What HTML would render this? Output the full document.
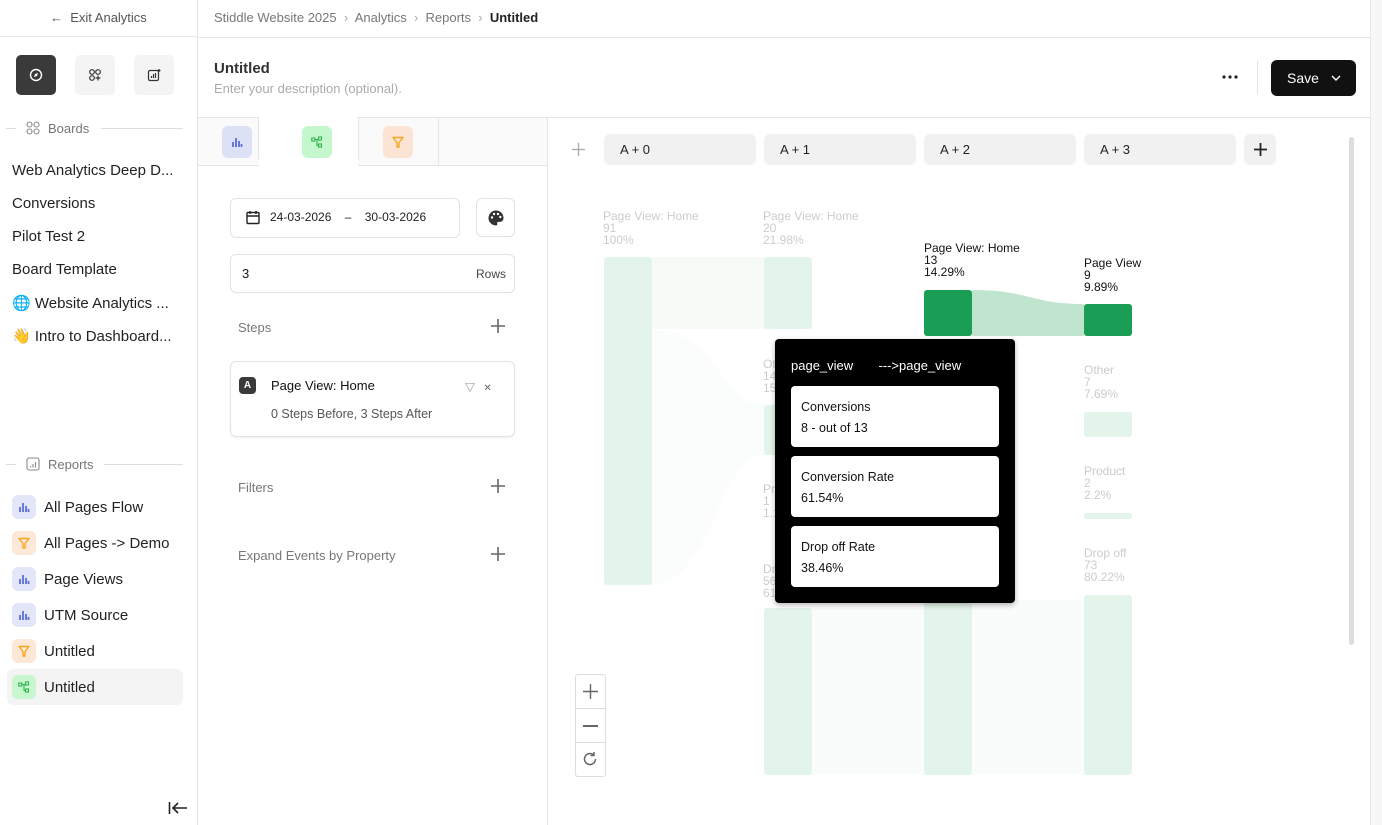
<!DOCTYPE html>
<html><head><meta charset="utf-8"><style>
*{box-sizing:border-box;margin:0;padding:0}
body{width:1382px;height:825px;overflow:hidden;background:#fff;font-family:"Liberation Sans","Noto Sans CJK SC",sans-serif;color:#1a1a1a;position:relative}
.a{position:absolute}
.t{white-space:nowrap}
.ico{display:flex;align-items:center;justify-content:center;border-radius:6px}
.nav{font-size:15px;left:12px;color:#222}
.rep{left:12px;height:24px;display:flex;align-items:center;font-size:15px;color:#222}
.rep .ico{width:24px;height:24px;margin-right:8px}
.g{color:#ccc;font-size:12px;line-height:12px}
.node{position:absolute;border-radius:3px;background:#e3f4ea}
.btn{background:#f1f1f1;border-radius:6px;font-size:13px;padding-left:16px;display:flex;align-items:center;color:#222}
.card{background:#fff;border-radius:4px;position:absolute;left:16px;width:208px;height:61px;padding:11px 10px;font-size:12.5px;line-height:21px;color:#111}
</style></head><body>
<svg width="0" height="0" style="position:absolute">
<defs>
<symbol id="bar" viewBox="0 0 12 12"><path d="M2 11V6M5 11V2M8 11V5M10.5 11V8" stroke="currentColor" stroke-width="1.8" fill="none"/></symbol>
<symbol id="fun" viewBox="0 0 12 12"><path d="M1 1.5h10L7 6.5V11H5V6.5z" fill="none" stroke="currentColor" stroke-width="1.4" stroke-linejoin="round"/></symbol>
<symbol id="flw" viewBox="0 0 12 12"><g fill="none" stroke="currentColor" stroke-width="1.1"><rect x="0.8" y="2" width="3" height="3"/><rect x="7.5" y="1" width="3" height="3"/><rect x="7.5" y="8" width="3" height="3"/><path d="M3.8 3.5h3.7M6 3.5v6h1.5"/></g></symbol>
</defs></svg>

<!-- sidebar -->
<div class="a" style="left:197px;top:0;width:1px;height:825px;background:#e5e5e5"></div>
<div class="a t" style="left:50px;top:10px;font-size:13px;color:#555">← &nbsp;Exit Analytics</div>
<div class="a" style="left:0;top:36px;width:197px;height:1px;background:#e5e5e5"></div>
<div class="a ico" style="left:16px;top:55px;width:40px;height:40px;background:#3a3a3a;border-radius:5px"><svg width="14" height="14" viewBox="0 0 14 14"><circle cx="7" cy="7" r="5.5" fill="none" stroke="#fff" stroke-width="1.4"/><path d="M9 5L6 6 5 9 8 8z" fill="#fff"/></svg></div>
<div class="a ico" style="left:75px;top:55px;width:40px;height:40px;background:#f4f4f4;border-radius:5px"><svg width="14" height="14" viewBox="0 0 14 14" fill="none" stroke="#333" stroke-width="1.2"><circle cx="4" cy="4" r="2.3"/><circle cx="10" cy="4" r="2.3"/><circle cx="4" cy="10" r="2.3"/><path d="M10 7.5v5M7.5 10h5"/></svg></div>
<div class="a ico" style="left:134px;top:55px;width:40px;height:40px;background:#f4f4f4;border-radius:5px"><svg width="14" height="14" viewBox="0 0 14 14" fill="none" stroke="#333" stroke-width="1.2"><rect x="1.5" y="2.5" width="10" height="10" rx="1.5"/><path d="M4.5 10V8M6.5 10V6M8.5 10V5M12 1v3M10.5 2.5h3"/></svg></div>
<div class="a" style="left:6px;top:128px;width:10px;height:1px;background:#ddd"></div>
<svg class="a" style="left:26px;top:121px" width="14" height="14" viewBox="0 0 14 14" fill="none" stroke="#888" stroke-width="1.1"><circle cx="3.5" cy="3.5" r="2.5"/><circle cx="10.5" cy="3.5" r="2.5"/><circle cx="3.5" cy="10.5" r="2.5"/><circle cx="10.5" cy="10.5" r="2.5"/></svg>
<div class="a t" style="left:48px;top:121px;font-size:13px;color:#777">Boards</div>
<div class="a" style="left:101px;top:128px;width:82px;height:1px;background:#ddd"></div>
<div class="a t nav" style="top:162px">Web Analytics Deep D...</div>
<div class="a t nav" style="top:195px">Conversions</div>
<div class="a t nav" style="top:228px">Pilot Test 2</div>
<div class="a t nav" style="top:261px">Board Template</div>
<div class="a t nav" style="top:294px">🌐 Website Analytics ...</div>
<div class="a t nav" style="top:327px">👋 Intro to Dashboard...</div>
<div class="a" style="left:6px;top:464px;width:10px;height:1px;background:#ddd"></div>
<svg class="a" style="left:26px;top:457px" width="14" height="14" viewBox="0 0 14 14" fill="none" stroke="#888" stroke-width="1.1"><rect x="1" y="1" width="12" height="12" rx="2"/><path d="M4.5 10.5V9M7 10.5V7M9.5 10.5V5"/></svg>
<div class="a t" style="left:48px;top:457px;font-size:13px;color:#777">Reports</div>
<div class="a" style="left:104px;top:464px;width:79px;height:1px;background:#ddd"></div>
<div class="a" style="left:7px;top:669px;width:176px;height:36px;background:#f4f4f4;border-radius:6px"></div>
<div class="a rep t" style="top:495px"><span class="ico" style="background:#e3e6f8;color:#5a6fd8"><svg width="12" height="12"><use href="#bar"/></svg></span>All Pages Flow</div>
<div class="a rep t" style="top:531px"><span class="ico" style="background:#fde7d6;color:#f5a623"><svg width="12" height="12"><use href="#fun"/></svg></span>All Pages -&gt; Demo</div>
<div class="a rep t" style="top:567px"><span class="ico" style="background:#e3e6f8;color:#5a6fd8"><svg width="12" height="12"><use href="#bar"/></svg></span>Page Views</div>
<div class="a rep t" style="top:603px"><span class="ico" style="background:#e3e6f8;color:#5a6fd8"><svg width="12" height="12"><use href="#bar"/></svg></span>UTM Source</div>
<div class="a rep t" style="top:639px"><span class="ico" style="background:#fde7d6;color:#f5a623"><svg width="12" height="12"><use href="#fun"/></svg></span>Untitled</div>
<div class="a rep t" style="top:675px"><span class="ico" style="background:#c8f7cf;color:#2fb34a"><svg width="12" height="12"><use href="#flw"/></svg></span>Untitled</div>
<svg class="a" style="left:168px;top:801px" width="20" height="14" viewBox="0 0 20 14" fill="none" stroke="#222" stroke-width="1.6"><path d="M1.5 1v12M5 7h14M10 2L5 7l5 5"/></svg>

<!-- header -->
<div class="a t" style="left:214px;top:10px;font-size:13px;color:#777">Stiddle Website 2025 &nbsp;<span style="color:#aaa">›</span>&nbsp; Analytics &nbsp;<span style="color:#aaa">›</span>&nbsp; Reports &nbsp;<span style="color:#aaa">›</span>&nbsp; <span style="color:#222;font-weight:bold">Untitled</span></div>
<div class="a" style="left:198px;top:37px;width:1172px;height:1px;background:#e5e5e5"></div>
<div class="a t" style="left:214px;top:60px;font-size:15px;font-weight:bold;color:#333">Untitled</div>
<div class="a t" style="left:214px;top:81px;font-size:13px;color:#aaa">Enter your description (optional).</div>
<svg class="a" style="left:1222px;top:75px" width="16" height="4"><circle cx="2" cy="2" r="1.6" fill="#222"/><circle cx="8" cy="2" r="1.6" fill="#222"/><circle cx="14" cy="2" r="1.6" fill="#222"/></svg>
<div class="a" style="left:1257px;top:61px;width:1px;height:34px;background:#e5e5e5"></div>
<div class="a t" style="left:1271px;top:60px;width:85px;height:36px;background:#111;border-radius:6px;color:#fff;font-size:14px;display:flex;align-items:center;padding-left:16px">Save <svg style="margin-left:12px" width="10" height="6" viewBox="0 0 10 6"><path d="M1 1l4 4 4-4" fill="none" stroke="#fff" stroke-width="1.4"/></svg></div>
<div class="a" style="left:198px;top:117px;width:1172px;height:1px;background:#e5e5e5"></div>
<div class="a" style="left:1370px;top:0;width:12px;height:825px;background:#f7f7f7;border-left:1px solid #e8e8e8"></div>
<div class="a" style="left:1349px;top:137px;width:5px;height:508px;background:#ddd;border-radius:3px"></div>

<!-- left config panel -->
<div class="a" style="left:198px;top:118px;width:350px;height:48px;background:#fafafa"></div>
<div class="a" style="left:198px;top:165px;width:350px;height:1px;background:#e5e5e5"></div>
<div class="a" style="left:258px;top:117px;width:101px;height:49px;background:#fff;border:1px solid #e5e5e5;border-top:none;border-bottom:none;border-radius:0 0 10px 10px"></div>
<div class="a" style="left:259px;top:160px;width:99px;height:8px;background:#fff"></div>
<div class="a" style="left:438px;top:118px;width:1px;height:48px;background:#e5e5e5"></div>
<div class="a" style="left:547px;top:118px;width:1px;height:707px;background:#e5e5e5"></div>
<div class="a ico" style="left:222px;top:126px;width:30px;height:32px;background:#dde1f5;color:#5a6fd8"><svg width="12" height="12"><use href="#bar"/></svg></div>
<div class="a ico" style="left:302px;top:126px;width:30px;height:32px;background:#c4f7cc;color:#2fb34a"><svg width="12" height="12"><use href="#flw"/></svg></div>
<div class="a ico" style="left:383px;top:126px;width:30px;height:32px;background:#fbe4d4;color:#f5a623"><svg width="12" height="12"><use href="#fun"/></svg></div>

<div class="a" style="left:230px;top:198px;width:230px;height:40px;border:1px solid #e2e2e2;border-radius:6px"></div>
<svg class="a" style="left:246px;top:210px" width="14" height="15" viewBox="0 0 14 15" fill="none" stroke="#222" stroke-width="1.4"><rect x="1" y="2.5" width="12" height="11" rx="1"/><path d="M1 6h12M4 1v3M10 1v3"/></svg>
<div class="a t" style="left:270px;top:210px;font-size:12px;color:#222">24-03-2026 &nbsp;&nbsp;&nbsp;–&nbsp;&nbsp;&nbsp; 30-03-2026</div>
<div class="a ico" style="left:476px;top:198px;width:39px;height:39px;border:1px solid #e2e2e2;border-radius:6px"><svg width="18" height="18" viewBox="0 0 18 18"><path d="M9 1.5a7.5 7.5 0 0 0 0 15c1 0 1.5-.7 1.2-1.6-.4-1 .2-2 1.3-2H13a3.7 3.7 0 0 0 3.5-3.7C16.5 4.6 13.2 1.5 9 1.5z" fill="#333"/><circle cx="5" cy="8.5" r="1.2" fill="#fff"/><circle cx="7" cy="5" r="1.2" fill="#fff"/><circle cx="11" cy="5" r="1.2" fill="#fff"/><circle cx="13.3" cy="8" r="1.2" fill="#fff"/></svg></div>
<div class="a" style="left:230px;top:254px;width:285px;height:39px;border:1px solid #e2e2e2;border-radius:6px"></div>
<div class="a t" style="left:242px;top:266px;font-size:13px">3</div>
<div class="a t" style="left:476px;top:267px;font-size:12px;color:#444">Rows</div>
<div class="a t" style="left:238px;top:320px;font-size:13px;color:#777">Steps</div>
<svg class="a" style="left:491px;top:319px" width="14" height="14" stroke="#666" stroke-width="1.6"><path d="M7 0v14M0 7h14"/></svg>
<div class="a" style="left:230px;top:361px;width:285px;height:76px;border:1px solid #e2e2e2;border-radius:6px;box-shadow:0 1px 2px rgba(0,0,0,.06)"></div>
<div class="a ico" style="left:239px;top:377px;width:17px;height:17px;background:#3a3a3a;border-radius:4px;color:#fff;font-size:10px;font-weight:bold">A</div>
<div class="a t" style="left:271px;top:378px;font-size:13px;color:#111">Page View: Home</div>
<div class="a t" style="left:465px;top:379px;font-size:10px;color:#666">▽ &nbsp;&nbsp;✕</div>
<div class="a t" style="left:271px;top:407px;font-size:12.5px;color:#555">0 Steps Before, 3 Steps After</div>
<div class="a t" style="left:238px;top:480px;font-size:13px;color:#777">Filters</div>
<svg class="a" style="left:491px;top:479px" width="14" height="14" stroke="#666" stroke-width="1.6"><path d="M7 0v14M0 7h14"/></svg>
<div class="a t" style="left:238px;top:548px;font-size:13px;color:#777">Expand Events by Property</div>
<svg class="a" style="left:491px;top:547px" width="14" height="14" stroke="#666" stroke-width="1.6"><path d="M7 0v14M0 7h14"/></svg>

<!-- chart -->
<svg class="a" style="left:572px;top:143px" width="13" height="13" stroke="#aaa" stroke-width="1.3"><path d="M6.5 0v13M0 6.5h13"/></svg>
<div class="a btn t" style="left:604px;top:134px;width:152px;height:31px">A + 0</div>
<div class="a btn t" style="left:764px;top:134px;width:152px;height:31px">A + 1</div>
<div class="a btn t" style="left:924px;top:134px;width:152px;height:31px">A + 2</div>
<div class="a btn t" style="left:1084px;top:134px;width:152px;height:31px">A + 3</div>
<div class="a ico" style="left:1244px;top:134px;width:32px;height:31px;background:#f1f1f1"><svg width="13" height="13" stroke="#222" stroke-width="1.8"><path d="M6.5 0v13M0 6.5h13"/></svg></div>

<svg class="a" style="left:550px;top:170px" width="800" height="620">
<path d="M102 87 H214 V159 H102z" fill="#f6fbf8"/>
<path d="M102 160 C170 160 170 235 214 235 V285 C170 285 160 415 102 415 z" fill="#fafdfb"/>
<path d="M262 438 H374 V605 H262z M422 430 H534 V605 H422z" fill="#f9fcfa"/>
<path d="M422 120 C480 120 480 134 534 134 V166 C480 166 480 166 422 166z" fill="#bfe5cf"/>
</svg>
<div class="node" style="left:604px;top:257px;width:48px;height:328px"></div>
<div class="node" style="left:764px;top:257px;width:48px;height:72px"></div>
<div class="node" style="left:764px;top:405px;width:48px;height:50px"></div>
<div class="node" style="left:764px;top:608px;width:48px;height:167px"></div>
<div class="node" style="left:924px;top:290px;width:48px;height:46px;background:#1a9e55"></div>
<div class="node" style="left:924px;top:600px;width:48px;height:175px"></div>
<div class="node" style="left:1084px;top:304px;width:48px;height:32px;background:#1a9e55"></div>
<div class="node" style="left:1084px;top:412px;width:48px;height:25px"></div>
<div class="node" style="left:1084px;top:513px;width:48px;height:6px"></div>
<div class="node" style="left:1084px;top:595px;width:48px;height:180px"></div>

<div class="a t g" style="left:603px;top:210px">Page View: Home<br>91<br>100%</div>
<div class="a t g" style="left:763px;top:210px">Page View: Home<br>20<br>21.98%</div>
<div class="a t g" style="left:763px;top:358px">Ot<br>14<br>15</div>
<div class="a t g" style="left:763px;top:483px">Pr<br>1<br>1.1</div>
<div class="a t g" style="left:763px;top:563px">Dr<br>56<br>61</div>
<div class="a t g" style="left:1084px;top:364px">Other<br>7<br>7.69%</div>
<div class="a t g" style="left:1084px;top:465px">Product<br>2<br>2.2%</div>
<div class="a t g" style="left:1084px;top:547px">Drop off<br>73<br>80.22%</div>
<div class="a t" style="left:924px;top:242px;font-size:12px;line-height:12px;color:#111">Page View: Home<br>13<br>14.29%</div>
<div class="a t" style="left:1084px;top:257px;font-size:12px;line-height:12px;color:#111;width:59px;overflow:hidden">Page View<br>9<br>9.89%</div>

<div class="a" style="left:775px;top:339px;width:240px;height:264px;background:#000;border-radius:4px;box-shadow:0 2px 6px rgba(0,0,0,.3)">
 <div class="a t" style="left:16px;top:19px;font-size:13px;color:#fff">page_view &nbsp;&nbsp;&nbsp;&nbsp;&nbsp;&nbsp;---&gt;page_view</div>
 <div class="card t" style="top:47px">Conversions<br>8 - out of 13</div>
 <div class="card t" style="top:117px">Conversion Rate<br>61.54%</div>
 <div class="card t" style="top:187px">Drop off Rate<br>38.46%</div>
</div>

<div class="a" style="left:575px;top:674px;width:31px;height:103px;border:1px solid #ddd;border-radius:3px;background:#fff"></div>
<div class="a" style="left:576px;top:708px;width:29px;height:1px;background:#ddd"></div>
<div class="a" style="left:576px;top:742px;width:29px;height:1px;background:#ddd"></div>
<svg class="a" style="left:583px;top:684px" width="15" height="15" stroke="#666" stroke-width="1.4"><path d="M7.5 0v15M0 7.5h15"/></svg>
<div class="a" style="left:583px;top:725px;width:15px;height:1.5px;background:#666"></div>
<svg class="a" style="left:582px;top:751px" width="16" height="16" viewBox="0 0 16 16" fill="none" stroke="#666" stroke-width="1.5"><path d="M13.5 8A5.5 5.5 0 1 1 11.5 3.8"/><path d="M12 1v3.5H8.5"/></svg>
</body></html>
